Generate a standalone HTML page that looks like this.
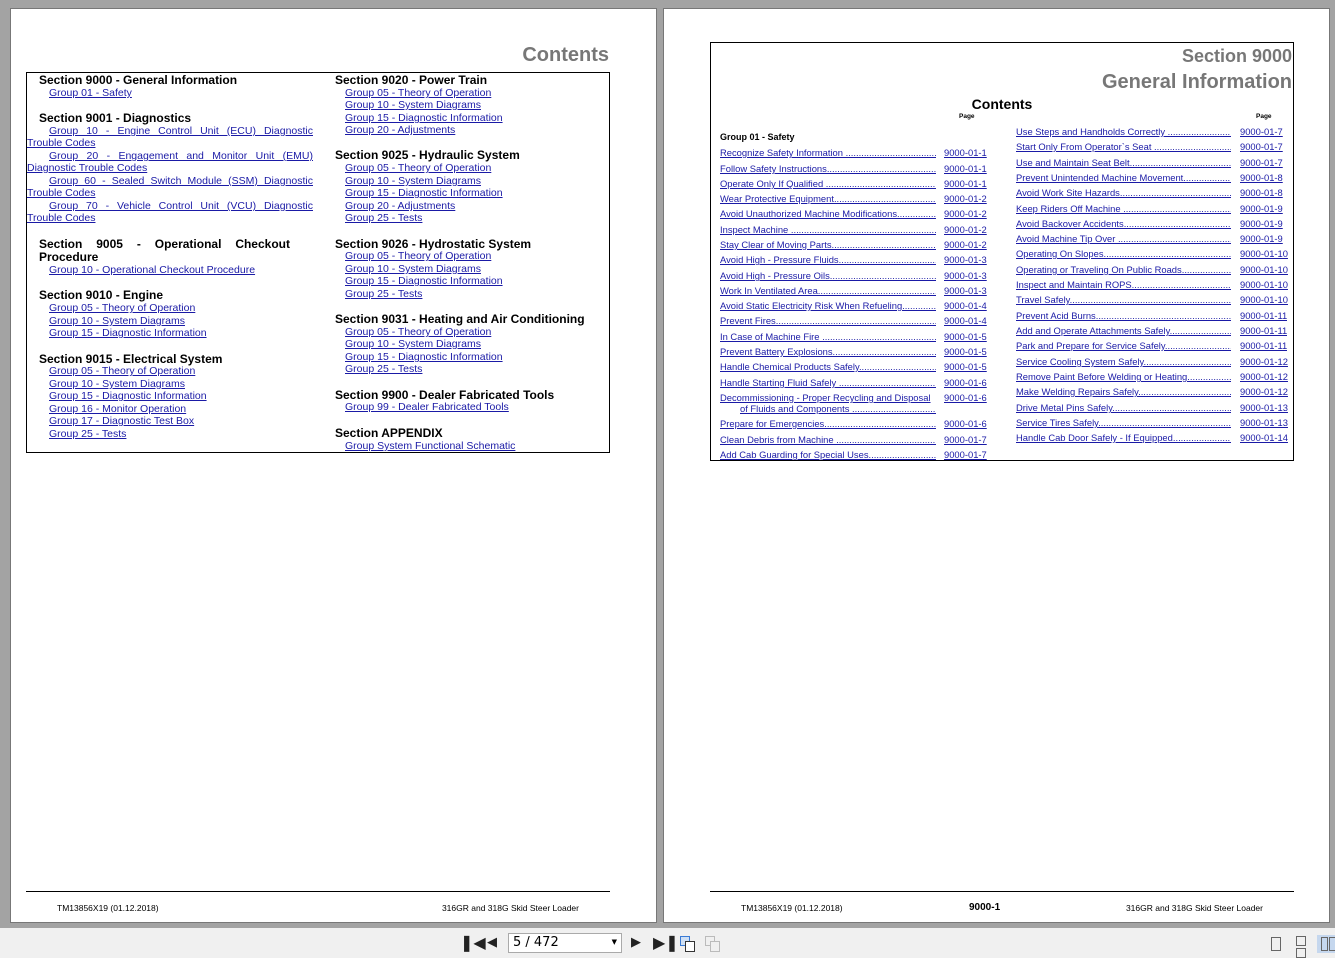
<!DOCTYPE html>
<html><head><meta charset="utf-8"><style>
*{margin:0;padding:0;box-sizing:border-box}
body{width:1335px;height:958px;background:#a3a3a3;position:relative;overflow:hidden;font-family:"Liberation Sans",Arial,sans-serif}
.pg{position:absolute;background:#fff;border:1px solid #777}
.a{position:absolute;white-space:nowrap}
.h{font-size:12px;font-weight:bold;color:#000}
.l{font-size:10.5px;color:#1a1aa6;text-decoration:underline}
.j{width:264px;text-align:justify;text-align-last:justify;white-space:normal}
.e{position:absolute;font-size:9.4px;color:#1a1aa6;text-decoration:underline;white-space:nowrap;overflow:hidden}
.ft{font-size:8.5px;color:#000}
.tb{position:absolute;left:0;top:928px;width:1335px;height:30px;background:#f0f0f0}
</style></head><body>
<div class="pg" style="left:10px;top:8px;width:647px;height:915px"></div>
<div class="pg" style="left:663px;top:8px;width:667px;height:915px"></div>

<!-- left page -->
<div class="a" style="left:400px;top:44px;width:209px;text-align:right;font-size:20px;font-weight:bold;color:#777">Contents</div>
<div style="position:absolute;left:26px;top:72px;width:584px;height:381px;border:1px solid #000"></div>
<div class="a h" style="left:39px;top:73px">Section 9000 - General Information</div>
<div class="a l" style="left:49px;top:87px">Group 01 - Safety</div>
<div class="a h" style="left:39px;top:111px">Section 9001 - Diagnostics</div>
<div class="a l j" style="left:49px;top:125px">Group 10 - Engine Control Unit (ECU) Diagnostic</div>
<div class="a l" style="left:27px;top:137px">Trouble Codes</div>
<div class="a l j" style="left:49px;top:150px">Group 20 - Engagement and Monitor Unit (EMU)</div>
<div class="a l" style="left:27px;top:162px">Diagnostic Trouble Codes</div>
<div class="a l j" style="left:49px;top:175px">Group 60 - Sealed Switch Module (SSM) Diagnostic</div>
<div class="a l" style="left:27px;top:187px">Trouble Codes</div>
<div class="a l j" style="left:49px;top:200px">Group 70 - Vehicle Control Unit (VCU) Diagnostic</div>
<div class="a l" style="left:27px;top:212px">Trouble Codes</div>
<div class="a h" style="left:39px;top:237px;width:251px;text-align:justify;text-align-last:justify;white-space:normal">Section 9005 - Operational Checkout</div>
<div class="a h" style="left:39px;top:250px">Procedure</div>
<div class="a l" style="left:49px;top:264px">Group 10 - Operational Checkout Procedure</div>
<div class="a h" style="left:39px;top:288px">Section 9010 - Engine</div>
<div class="a l" style="left:49px;top:302px">Group 05 - Theory of Operation</div>
<div class="a l" style="left:49px;top:315px">Group 10 - System Diagrams</div>
<div class="a l" style="left:49px;top:327px">Group 15 - Diagnostic Information</div>
<div class="a h" style="left:39px;top:352px">Section 9015 - Electrical System</div>
<div class="a l" style="left:49px;top:365px">Group 05 - Theory of Operation</div>
<div class="a l" style="left:49px;top:378px">Group 10 - System Diagrams</div>
<div class="a l" style="left:49px;top:390px">Group 15 - Diagnostic Information</div>
<div class="a l" style="left:49px;top:403px">Group 16 - Monitor Operation</div>
<div class="a l" style="left:49px;top:415px">Group 17 - Diagnostic Test Box</div>
<div class="a l" style="left:49px;top:428px">Group 25 - Tests</div>

<div class="a h" style="left:335px;top:73px">Section 9020 - Power Train</div>
<div class="a l" style="left:345px;top:87px">Group 05 - Theory of Operation</div>
<div class="a l" style="left:345px;top:99px">Group 10 - System Diagrams</div>
<div class="a l" style="left:345px;top:112px">Group 15 - Diagnostic Information</div>
<div class="a l" style="left:345px;top:124px">Group 20 - Adjustments</div>
<div class="a h" style="left:335px;top:148px">Section 9025 - Hydraulic System</div>
<div class="a l" style="left:345px;top:162px">Group 05 - Theory of Operation</div>
<div class="a l" style="left:345px;top:175px">Group 10 - System Diagrams</div>
<div class="a l" style="left:345px;top:187px">Group 15 - Diagnostic Information</div>
<div class="a l" style="left:345px;top:200px">Group 20 - Adjustments</div>
<div class="a l" style="left:345px;top:212px">Group 25 - Tests</div>
<div class="a h" style="left:335px;top:237px">Section 9026 - Hydrostatic System</div>
<div class="a l" style="left:345px;top:250px">Group 05 - Theory of Operation</div>
<div class="a l" style="left:345px;top:263px">Group 10 - System Diagrams</div>
<div class="a l" style="left:345px;top:275px">Group 15 - Diagnostic Information</div>
<div class="a l" style="left:345px;top:288px">Group 25 - Tests</div>
<div class="a h" style="left:335px;top:312px">Section 9031 - Heating and Air Conditioning</div>
<div class="a l" style="left:345px;top:326px">Group 05 - Theory of Operation</div>
<div class="a l" style="left:345px;top:338px">Group 10 - System Diagrams</div>
<div class="a l" style="left:345px;top:351px">Group 15 - Diagnostic Information</div>
<div class="a l" style="left:345px;top:363px">Group 25 - Tests</div>
<div class="a h" style="left:335px;top:388px">Section 9900 - Dealer Fabricated Tools</div>
<div class="a l" style="left:345px;top:401px">Group 99 - Dealer Fabricated Tools</div>
<div class="a h" style="left:335px;top:426px">Section APPENDIX</div>
<div class="a l" style="left:345px;top:440px">Group System Functional Schematic</div>

<div style="position:absolute;left:26px;top:891px;width:584px;border-top:1px solid #000"></div>
<div class="a ft" style="left:57px;top:903px">TM13856X19 (01.12.2018)</div>
<div class="a ft" style="left:380px;top:903px;width:199px;text-align:right">316GR and 318G Skid Steer Loader</div>

<!-- right page -->
<div style="position:absolute;left:710px;top:42px;width:584px;height:419px;border:1px solid #000"></div>
<div class="a" style="left:1000px;top:46px;width:292px;text-align:right;font-size:18px;font-weight:bold;color:#777">Section 9000</div>
<div class="a" style="left:950px;top:71px;width:342px;text-align:right;font-size:20px;font-weight:bold;color:#777">General Information</div>
<div class="a" style="left:940px;top:96px;width:124px;text-align:center;font-size:14px;font-weight:bold">Contents</div>
<div class="a" style="left:959px;top:113px;font-size:6.5px;font-weight:bold">Page</div>
<div class="a" style="left:1256px;top:113px;font-size:6.5px;font-weight:bold">Page</div>
<div class="a" style="left:720px;top:132px;font-size:9px;font-weight:bold">Group 01 - Safety</div>
<div style="position:absolute;left:710px;top:891px;width:584px;border-top:1px solid #000"></div>
<div class="a ft" style="left:741px;top:903px">TM13856X19 (01.12.2018)</div>
<div class="a" style="left:969px;top:902px;font-size:10px;font-weight:bold">9000-1</div>
<div class="a ft" style="left:1064px;top:903px;width:199px;text-align:right">316GR and 318G Skid Steer Loader</div>

<!-- entries left -->
<div class="e" style="left:720px;top:147px;width:216px">Recognize Safety Information ...........................................................</div><div class="e" style="left:944px;top:147px">9000-01-1</div>
<div class="e" style="left:720px;top:163px;width:216px">Follow Safety Instructions...........................................................</div><div class="e" style="left:944px;top:163px">9000-01-1</div>
<div class="e" style="left:720px;top:178px;width:216px">Operate Only If Qualified ...........................................................</div><div class="e" style="left:944px;top:178px">9000-01-1</div>
<div class="e" style="left:720px;top:193px;width:216px">Wear Protective Equipment...........................................................</div><div class="e" style="left:944px;top:193px">9000-01-2</div>
<div class="e" style="left:720px;top:208px;width:216px">Avoid Unauthorized Machine Modifications...........................................................</div><div class="e" style="left:944px;top:208px">9000-01-2</div>
<div class="e" style="left:720px;top:224px;width:216px">Inspect Machine ...........................................................................</div><div class="e" style="left:944px;top:224px">9000-01-2</div>
<div class="e" style="left:720px;top:239px;width:216px">Stay Clear of Moving Parts...........................................................</div><div class="e" style="left:944px;top:239px">9000-01-2</div>
<div class="e" style="left:720px;top:254px;width:216px">Avoid High - Pressure Fluids...........................................................</div><div class="e" style="left:944px;top:254px">9000-01-3</div>
<div class="e" style="left:720px;top:270px;width:216px">Avoid High - Pressure Oils...........................................................</div><div class="e" style="left:944px;top:270px">9000-01-3</div>
<div class="e" style="left:720px;top:285px;width:216px">Work In Ventilated Area...........................................................</div><div class="e" style="left:944px;top:285px">9000-01-3</div>
<div class="e" style="left:720px;top:300px;width:216px">Avoid Static Electricity Risk When Refueling...........................................................</div><div class="e" style="left:944px;top:300px">9000-01-4</div>
<div class="e" style="left:720px;top:315px;width:216px">Prevent Fires...........................................................................</div><div class="e" style="left:944px;top:315px">9000-01-4</div>
<div class="e" style="left:720px;top:331px;width:216px">In Case of Machine Fire ...........................................................</div><div class="e" style="left:944px;top:331px">9000-01-5</div>
<div class="e" style="left:720px;top:346px;width:216px">Prevent Battery Explosions...........................................................</div><div class="e" style="left:944px;top:346px">9000-01-5</div>
<div class="e" style="left:720px;top:361px;width:216px">Handle Chemical Products Safely...........................................................</div><div class="e" style="left:944px;top:361px">9000-01-5</div>
<div class="e" style="left:720px;top:377px;width:216px">Handle Starting Fluid Safely ...........................................................</div><div class="e" style="left:944px;top:377px">9000-01-6</div>
<div class="e" style="left:720px;top:392px;width:222px">Decommissioning - Proper Recycling and Disposal</div><div class="e" style="left:944px;top:392px">9000-01-6</div>
<div class="e" style="left:740px;top:403px;width:196px">of Fluids and Components ...........................................................</div>
<div class="e" style="left:720px;top:418px;width:216px">Prepare for Emergencies...........................................................</div><div class="e" style="left:944px;top:418px">9000-01-6</div>
<div class="e" style="left:720px;top:434px;width:216px">Clean Debris from Machine ...........................................................</div><div class="e" style="left:944px;top:434px">9000-01-7</div>
<div class="e" style="left:720px;top:449px;width:216px">Add Cab Guarding for Special Uses...........................................................</div><div class="e" style="left:944px;top:449px">9000-01-7</div>
<!-- entries right -->
<div class="e" style="left:1016px;top:126px;width:215px">Use Steps and Handholds Correctly ...........................................................</div><div class="e" style="left:1240px;top:126px">9000-01-7</div>
<div class="e" style="left:1016px;top:141px;width:215px">Start Only From Operator`s Seat ...........................................................</div><div class="e" style="left:1240px;top:141px">9000-01-7</div>
<div class="e" style="left:1016px;top:157px;width:215px">Use and Maintain Seat Belt...........................................................</div><div class="e" style="left:1240px;top:157px">9000-01-7</div>
<div class="e" style="left:1016px;top:172px;width:215px">Prevent Unintended Machine Movement...........................................................</div><div class="e" style="left:1240px;top:172px">9000-01-8</div>
<div class="e" style="left:1016px;top:187px;width:215px">Avoid Work Site Hazards...........................................................</div><div class="e" style="left:1240px;top:187px">9000-01-8</div>
<div class="e" style="left:1016px;top:203px;width:215px">Keep Riders Off Machine ...........................................................</div><div class="e" style="left:1240px;top:203px">9000-01-9</div>
<div class="e" style="left:1016px;top:218px;width:215px">Avoid Backover Accidents...........................................................</div><div class="e" style="left:1240px;top:218px">9000-01-9</div>
<div class="e" style="left:1016px;top:233px;width:215px">Avoid Machine Tip Over ...........................................................</div><div class="e" style="left:1240px;top:233px">9000-01-9</div>
<div class="e" style="left:1016px;top:248px;width:215px">Operating On Slopes...........................................................</div><div class="e" style="left:1240px;top:248px">9000-01-10</div>
<div class="e" style="left:1016px;top:264px;width:215px">Operating or Traveling On Public Roads...........................................................</div><div class="e" style="left:1240px;top:264px">9000-01-10</div>
<div class="e" style="left:1016px;top:279px;width:215px">Inspect and Maintain ROPS...........................................................</div><div class="e" style="left:1240px;top:279px">9000-01-10</div>
<div class="e" style="left:1016px;top:294px;width:215px">Travel Safely...........................................................................</div><div class="e" style="left:1240px;top:294px">9000-01-10</div>
<div class="e" style="left:1016px;top:310px;width:215px">Prevent Acid Burns...........................................................................</div><div class="e" style="left:1240px;top:310px">9000-01-11</div>
<div class="e" style="left:1016px;top:325px;width:215px">Add and Operate Attachments Safely...........................................................</div><div class="e" style="left:1240px;top:325px">9000-01-11</div>
<div class="e" style="left:1016px;top:340px;width:215px">Park and Prepare for Service Safely...........................................................</div><div class="e" style="left:1240px;top:340px">9000-01-11</div>
<div class="e" style="left:1016px;top:356px;width:215px">Service Cooling System Safely...........................................................</div><div class="e" style="left:1240px;top:356px">9000-01-12</div>
<div class="e" style="left:1016px;top:371px;width:215px">Remove Paint Before Welding or Heating...........................................................</div><div class="e" style="left:1240px;top:371px">9000-01-12</div>
<div class="e" style="left:1016px;top:386px;width:215px">Make Welding Repairs Safely...........................................................</div><div class="e" style="left:1240px;top:386px">9000-01-12</div>
<div class="e" style="left:1016px;top:402px;width:215px">Drive Metal Pins Safely...........................................................</div><div class="e" style="left:1240px;top:402px">9000-01-13</div>
<div class="e" style="left:1016px;top:417px;width:215px">Service Tires Safely...........................................................................</div><div class="e" style="left:1240px;top:417px">9000-01-13</div>
<div class="e" style="left:1016px;top:432px;width:215px">Handle Cab Door Safely - If Equipped...........................................................</div><div class="e" style="left:1240px;top:432px">9000-01-14</div>

<!-- toolbar -->
<div class="tb"></div>
<div class="a" style="left:460px;top:933px;font-size:16px;color:#222">&#10074;&#9664;</div>
<div class="a" style="left:487px;top:934px;font-size:13px;color:#222">&#9664;</div>
<div style="position:absolute;left:508px;top:933px;width:114px;height:20px;border:1px solid #aaa;background:#fff;font-size:13px;padding:1px 4px;font-family:'DejaVu Sans',sans-serif">5 / 472<span style="position:absolute;right:4px;top:4px;font-size:7px">&#9660;</span></div>
<div class="a" style="left:631px;top:934px;font-size:13px;color:#222">&#9654;</div>
<div class="a" style="left:653px;top:933px;font-size:16px;color:#222">&#9654;&#10074;</div>
<div style="position:absolute;left:680px;top:936px;width:10px;height:10px;border:1px solid #3a7bd5;background:#cfe0f5"></div>
<div style="position:absolute;left:685px;top:941px;width:10px;height:11px;border:1px solid #333;background:#fff"></div>
<div style="position:absolute;left:705px;top:936px;width:10px;height:10px;border:1px solid #bbb"></div>
<div style="position:absolute;left:710px;top:941px;width:10px;height:11px;border:1px solid #bbb;background:#f0f0f0"></div>
<div style="position:absolute;left:1271px;top:937px;width:10px;height:14px;border:1px solid #666"></div>
<div style="position:absolute;left:1296px;top:936px;width:10px;height:10px;border:1px solid #666"></div>
<div style="position:absolute;left:1296px;top:948px;width:10px;height:10px;border:1px solid #666"></div>
<div style="position:absolute;left:1317px;top:935px;width:18px;height:18px;background:#c5d7ee"></div>
<div style="position:absolute;left:1321px;top:937px;width:7px;height:14px;border:1px solid #666"></div>
<div style="position:absolute;left:1329px;top:937px;width:7px;height:14px;border:1px solid #666"></div>
</body></html>
